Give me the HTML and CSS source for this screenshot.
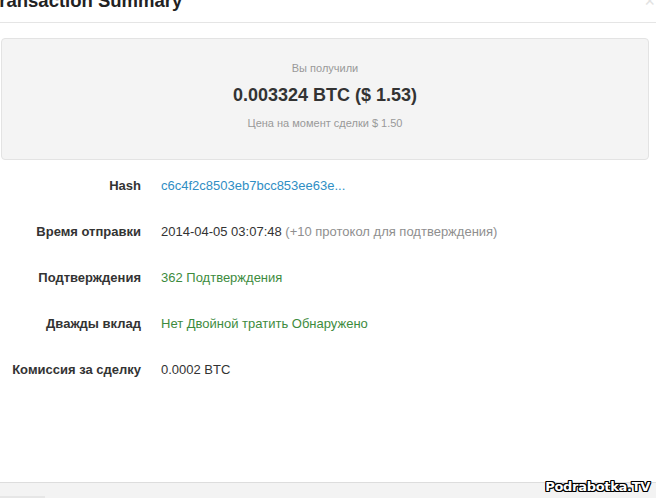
FILE: index.html
```html
<!DOCTYPE html>
<html lang="ru">
<head>
  <meta charset="UTF-8">
  <title>Transaction Summary</title>
  <link rel="stylesheet" href="styles.css">
</head>
<body>
  <div class="modal">
    <div class="modal-header">
      <h3>Transaction Summary</h3>
      <span class="close">&times;</span>
    </div>

    <div class="well">
      <div class="well-label">Вы получили</div>
      <div class="well-amount">0.003324 BTC ($ 1.53)</div>
      <div class="well-label">Цена на момент сделки $ 1.50</div>
    </div>

    <div class="details">
      <div class="row">
        <div class="label">Hash</div>
        <div class="value link">c6c4f2c8503eb7bcc853ee63e...</div>
      </div>
      <div class="row">
        <div class="label">Время отправки</div>
        <div class="value">2014-04-05 03:07:48 <span class="muted">(+10 протокол для подтверждения)</span></div>
      </div>
      <div class="row">
        <div class="label">Подтверждения</div>
        <div class="value ok">362 Подтверждения</div>
      </div>
      <div class="row">
        <div class="label">Дважды вклад</div>
        <div class="value ok">Нет Двойной тратить Обнаружено</div>
      </div>
      <div class="row">
        <div class="label">Комиссия за сделку</div>
        <div class="value">0.0002 BTC</div>
      </div>
    </div>

    <div class="modal-footer">
      <div class="footer-btn"></div>
      <div class="watermark">Podrabotka.TV</div>
    </div>
  </div>
</body>
</html>
```

FILE: styles.css
```css
body {
  margin: 0;
  font-family: 'Liberation Sans', Arial, sans-serif;
  background-color: #fff;
  color: #333;
  overflow: hidden;
}
.modal {
  display: flex;
  flex-direction: column;
  height: 498px;
}
.modal-header {
  position: relative;
  border-bottom: 1px solid #e5e5e5;
  height: 22px;
}
.modal-header h3 {
  margin: -10px 0 0 -11px;
  font-size: 18.5px;
  line-height: 22px;
  font-weight: bold;
  color: #222;
}
.close {
  position: absolute;
  top: -9px;
  right: 1px;
  font-size: 18px;
  color: #e2e2e2;
}
.well {
  margin: 15px 7px 0 1px;
  height: 120px;
  background-color: #f4f4f4;
  border: 1px solid #e3e3e3;
  border-radius: 4px;
  display: flex;
  flex-direction: column;
  align-items: center;
  justify-content: center;
  gap: 11px;
}
.well > :first-child {
  margin-top: -8px;
}
.well-label {
  font-size: 11px;
  color: #999;
}
.well-amount {
  font-size: 18px;
  font-weight: bold;
  color: #333;
}
.details {
  margin-top: 2px;
}
.row {
  display: flex;
  align-items: center;
  height: 46px;
  font-size: 13px;
}
.label {
  width: 141px;
  text-align: right;
  font-weight: bold;
  color: #333;
}
.value {
  margin-left: 20px;
  color: #333;
}
.link {
  color: #2f8ec4;
}
.ok {
  color: #3d8b3d;
}
.muted {
  color: #8f8f8f;
}
.modal-footer {
  position: relative;
  margin-top: auto;
  height: 15px;
  border-top: 1px solid #ddd;
  background-color: #f3f3f3;
}
.footer-btn {
  position: absolute;
  left: 0;
  bottom: 0;
  width: 45px;
  height: 2px;
  background-color: #e6e6e6;
}
.watermark {
  position: absolute;
  right: 6px;
  top: -4px;
  font-family: 'DejaVu Sans', sans-serif;
  font-size: 13px;
  font-weight: bold;
  letter-spacing: -0.3px;
  color: #fff;
  text-shadow:
    -1px -1px 0 #000,
    1px -1px 0 #000,
    -1px 1px 0 #000,
    1px 1px 0 #000,
    -1px 0 0 #000,
    1px 0 0 #000,
    0 -1px 0 #000,
    0 1px 0 #000;
}
```
